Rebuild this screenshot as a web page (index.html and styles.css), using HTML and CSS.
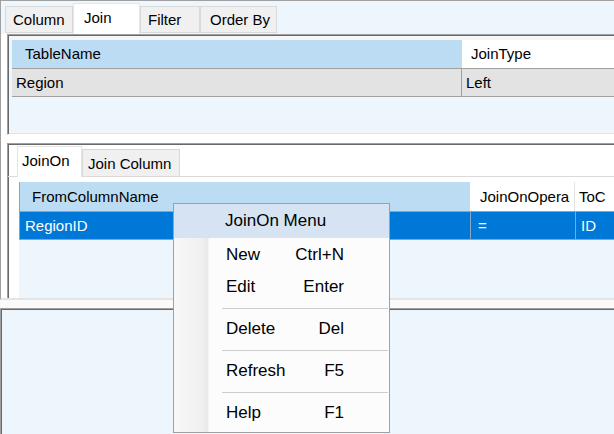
FILE: index.html
```html
<!DOCTYPE html>
<html>
<head>
<meta charset="utf-8">
<title>Join</title>
<link rel="stylesheet" href="styles.css">
</head>
<body>
<div class="app">
  <div class="top">
    <div class="tabstrip">
      <div class="tab t-column">Column</div>
      <div class="tab active t-join">Join</div>
      <div class="tab t-filter">Filter</div>
      <div class="tab t-order">Order By</div>
    </div>
    <div class="tabpage">
      <div class="panel panel1">
        <div class="grid grid1">
          <div class="row head">
            <div class="cell c1 hl">TableName</div>
            <div class="cell c2">JoinType</div>
          </div>
          <div class="row data">
            <div class="cell c1">Region</div>
            <div class="cell c2">Left</div>
          </div>
        </div>
      </div>
      <div class="panel panel2">
        <div class="subtabs">
          <div class="stab active s-joinon">JoinOn</div>
          <div class="stab s-joincol">Join Column</div>
        </div>
        <div class="subpage">
          <div class="grid grid2">
            <div class="row head">
              <div class="cell c1 hl">FromColumnName</div>
              <div class="cell c2">JoinOnOpera</div>
              <div class="cell c3">ToC</div>
            </div>
            <div class="row data selected">
              <div class="cell c1">RegionID</div>
              <div class="cell c2">=</div>
              <div class="cell c3">ID</div>
            </div>
          </div>
        </div>
      </div>
    </div>
  </div>
  <div class="splitgap"></div>
  <div class="bottom"></div>

  <div class="menu">
    <div class="menu-head">JoinOn Menu</div>
    <div class="item"><span>New</span><span>Ctrl+N</span></div>
    <div class="item"><span>Edit</span><span>Enter</span></div>
    <div class="sep"></div>
    <div class="item"><span>Delete</span><span>Del</span></div>
    <div class="sep"></div>
    <div class="item"><span>Refresh</span><span>F5</span></div>
    <div class="sep"></div>
    <div class="item"><span>Help</span><span>F1</span></div>
  </div>
</div>
</body>
</html>
```
FILE: styles.css
```css
* { box-sizing: border-box; }
html, body { margin: 0; padding: 0; }
body {
  background: #fff;
  font-family: "Segoe UI", "Liberation Sans", Arial, sans-serif;
  font-size: 15px;
  color: #000;
}
.app {
  position: relative;
  width: 614px;
  height: 434px;
  overflow: hidden;
  display: flex;
  flex-direction: column;
}

/* top split panel */
.top {
  height: 300px;
  flex: none;
  border-top: 1px solid #a0a0a0;
  border-left: 1px solid #a0a0a0;
  border-bottom: 2px solid #e4e4e4;
  display: flex;
  flex-direction: column;
}
.tabstrip {
  height: 33px;
  flex: none;
  background: #eef6fd;
  display: flex;
  align-items: flex-end;
  padding-left: 4px;
}
.tab {
  height: 27px;
  margin-bottom: 1px;
  border: 1px solid #d9d9d9;
  background: #f0f0f0;
  line-height: 26px;
  padding-left: 7px;
  white-space: nowrap;
}
.tab.active {
  height: 31px;
  margin-bottom: 0;
  background: #fff;
  border-color: #e6e6e6;
  border-bottom: none;
  line-height: 28px;
  padding-left: 10px;
}
.t-column { width: 68px; }
.t-join { width: 67px; }
.t-filter { width: 60px; }
.t-order { width: 77px; padding-left: 9px; }

.tabpage {
  flex: 1;
  min-height: 0;
  display: flex;
  flex-direction: column;
  padding-left: 6px;
  background: #fff;
}
.panel {
  border-top: 1px solid #a0a0a0;
  border-left: 1px solid #a0a0a0;
}
.panel1 {
  height: 101px;
  flex: none;
  display: flex;
  flex-direction: column;
  padding: 5px 0 2px 2px;
  background: #f6f6f6;
  border-bottom: 1px solid #fff;
  box-shadow: inset 1px 1px 0 #696969, inset 0 -1px 0 #e3e3e3;
}
.grid {
  flex: 1;
  background: #eef6fd;
  overflow: hidden;
}
.row { display: flex; white-space: nowrap; }
.cell { overflow: hidden; white-space: nowrap; }

.grid1 .row { margin-left: 2px; }
.grid1 .head { height: 29px; border-bottom: 1px solid #a0a0a0; line-height: 28px; }
.grid1 .data { height: 28px; border-bottom: 1px solid #a0a0a0; line-height: 27px; background: #e3e3e3; }
.grid1 .c1 { width: 450px; flex: none; }
.grid1 .c2 { flex: 1; }
.grid1 .head .c1 { padding-left: 13px; }
.grid1 .head .c2 { padding-left: 9px; background: #fff; }
.grid1 .data .c1 { padding-left: 4px; border-right: 1px solid #a0a0a0; }
.grid1 .data .c2 { padding-left: 4px; }
.hl { background: #bcdcf4; }

.panel2 {
  flex: 1;
  min-height: 0;
  margin-top: 8px;
  display: flex;
  flex-direction: column;
  background: #fff;
  box-shadow: inset 1px 1px 0 #696969;
}
.subtabs {
  height: 31px;
  flex: none;
  margin-top: 2px;
  padding-left: 9px;
  display: flex;
  align-items: flex-end;
  border-bottom: 1px solid #dadada;
}
.stab {
  height: 27px;
  border: 1px solid #d9d9d9;
  border-bottom: none;
  background: #f0f0f0;
  line-height: 27px;
  padding-left: 5px;
  white-space: nowrap;
}
.stab.active {
  height: 31px;
  margin-bottom: -1px;
  background: #fff;
  border-color: #e3e3e3;
  line-height: 27px;
  padding-left: 4px;
}
.s-joinon { width: 65px; }
.s-joincol { width: 98px; }

.subpage {
  flex: 1;
  min-height: 0;
  display: flex;
  flex-direction: column;
  padding: 5px 0 0 11px;
}
.grid2 .row { border-left: 1px solid #a0a0a0; }
.grid2 .head { height: 30px; line-height: 29px; border-bottom: 1px solid #a0a0a0; }
.grid2 .data { height: 28px; line-height: 27px; border-bottom: 1px solid #a0a0a0; }
.grid2 .c1 { width: 450px; flex: none; }
.grid2 .c2 { width: 105px; flex: none; }
.grid2 .c3 { flex: 1; }
.grid2 .head .c1 { padding-left: 12px; }
.grid2 .head .c2 { padding-left: 10px; background: #fff; border-right: 1px solid #e3e3e3; }
.grid2 .head .c3 { padding-left: 4px; background: #fff; }
.grid2 .data .c1 { padding-left: 5px; }
.grid2 .data .c2 { padding-left: 7px; border-left: 1px solid #8aa6c2; }
.grid2 .data .c3 { padding-left: 5px; border-left: 1px solid #8aa6c2; }
.selected { background: #0078d7; color: #fff; }

/* bottom split panel */
.splitgap { height: 8px; flex: none; background: #fafafa; }
.bottom {
  flex: 1;
  border-top: 1px solid #a0a0a0;
  border-left: 1px solid #a0a0a0;
  box-shadow: inset 1px 1px 0 #696969;
  background: #eef6fd;
}

/* context menu */
.menu {
  position: absolute;
  left: 173px;
  top: 203px;
  width: 217px;
  height: 230px;
  border: 1px solid #a0a0a0;
  background: linear-gradient(to right, #f8f8f8 0, #f1f1f1 26px, #e9e9e9 34px, #fcfcfc 35px, #fcfcfc 100%);
  font-size: 17px;
  color: #000;
}
.menu-head {
  height: 34px;
  line-height: 34px;
  margin-bottom: 1px;
  padding-left: 51px;
  background: #d5e3f2;
}
.item {
  height: 32px;
  display: flex;
  align-items: center;
  justify-content: space-between;
  padding: 0 45px 0 52px;
}
.sep {
  height: 10px;
  margin: 0 1px 0 48px;
  background: linear-gradient(#cdcdcd, #cdcdcd) 0 5px / 100% 1px no-repeat;
}
```
